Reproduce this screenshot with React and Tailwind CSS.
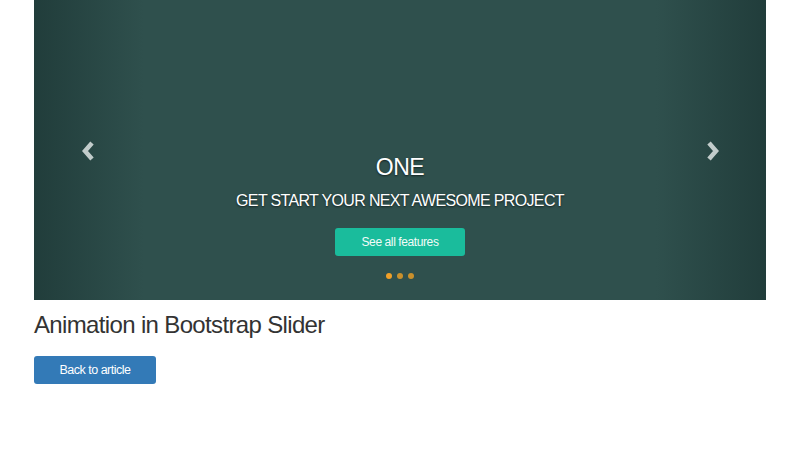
import React from "react";

export default function App() {
  return (
    <div className="w-[800px] h-[450px] bg-white" style={{ fontFamily: '"Liberation Sans", Arial, sans-serif' }}>
      <div className="mx-[34px] w-[732px]">
        <div className="relative h-[300px] bg-[#2f504d] overflow-hidden">
          <div className="absolute left-0 top-0 h-full w-[110px] bg-gradient-to-r from-[#213d3b] to-[#2f504d]" />
          <div className="absolute right-0 top-0 h-full w-[110px] bg-gradient-to-l from-[#213d3b] to-[#2f504d]" />
          <svg className="absolute left-[47px] top-[141px]" width="16" height="20" viewBox="0 0 16 20">
            <path d="M11 2 L4 10 L11 18" fill="none" stroke="#c2cccb" strokeWidth="4.5" strokeLinejoin="miter" />
          </svg>
          <svg className="absolute left-[670px] top-[141px]" width="16" height="20" viewBox="0 0 16 20">
            <path d="M5 2 L12 10 L5 18" fill="none" stroke="#c2cccb" strokeWidth="4.5" strokeLinejoin="miter" />
          </svg>
          <div className="relative flex flex-col items-center pt-[152px] text-white">
            <div className="text-[23px] leading-[30px] tracking-[-0.5px] [text-shadow:0_1px_2px_rgba(0,0,0,0.6)]">ONE</div>
            <div className="mt-[8px] text-[16px] leading-[22px] tracking-[-0.65px] [text-shadow:0_1px_2px_rgba(0,0,0,0.6)]">GET START YOUR NEXT AWESOME PROJECT</div>
            <div className="mt-[16px] flex h-[28px] w-[130px] items-center justify-center rounded-[3px] bg-[#1abc9c] text-[12px] tracking-[-0.4px] text-[#f2fbf8]">See all features</div>
            <div className="mt-[17px] flex gap-[5px]">
              <span className="h-[6px] w-[6px] rounded-full bg-[#f0a028]" />
              <span className="h-[6px] w-[6px] rounded-full bg-[#c9902c]" />
              <span className="h-[6px] w-[6px] rounded-full bg-[#c9902c]" />
            </div>
          </div>
        </div>
        <h1 className="mt-[11px] text-[24px] leading-[28px] tracking-[-0.65px] text-[#333]">Animation in Bootstrap Slider</h1>
        <div className="mt-[17px] flex h-[28px] w-[122px] items-center justify-center rounded-[3px] bg-[#337ab7] text-[12.5px] tracking-[-0.5px] text-white">Back to article</div>
      </div>
    </div>
  );
}
